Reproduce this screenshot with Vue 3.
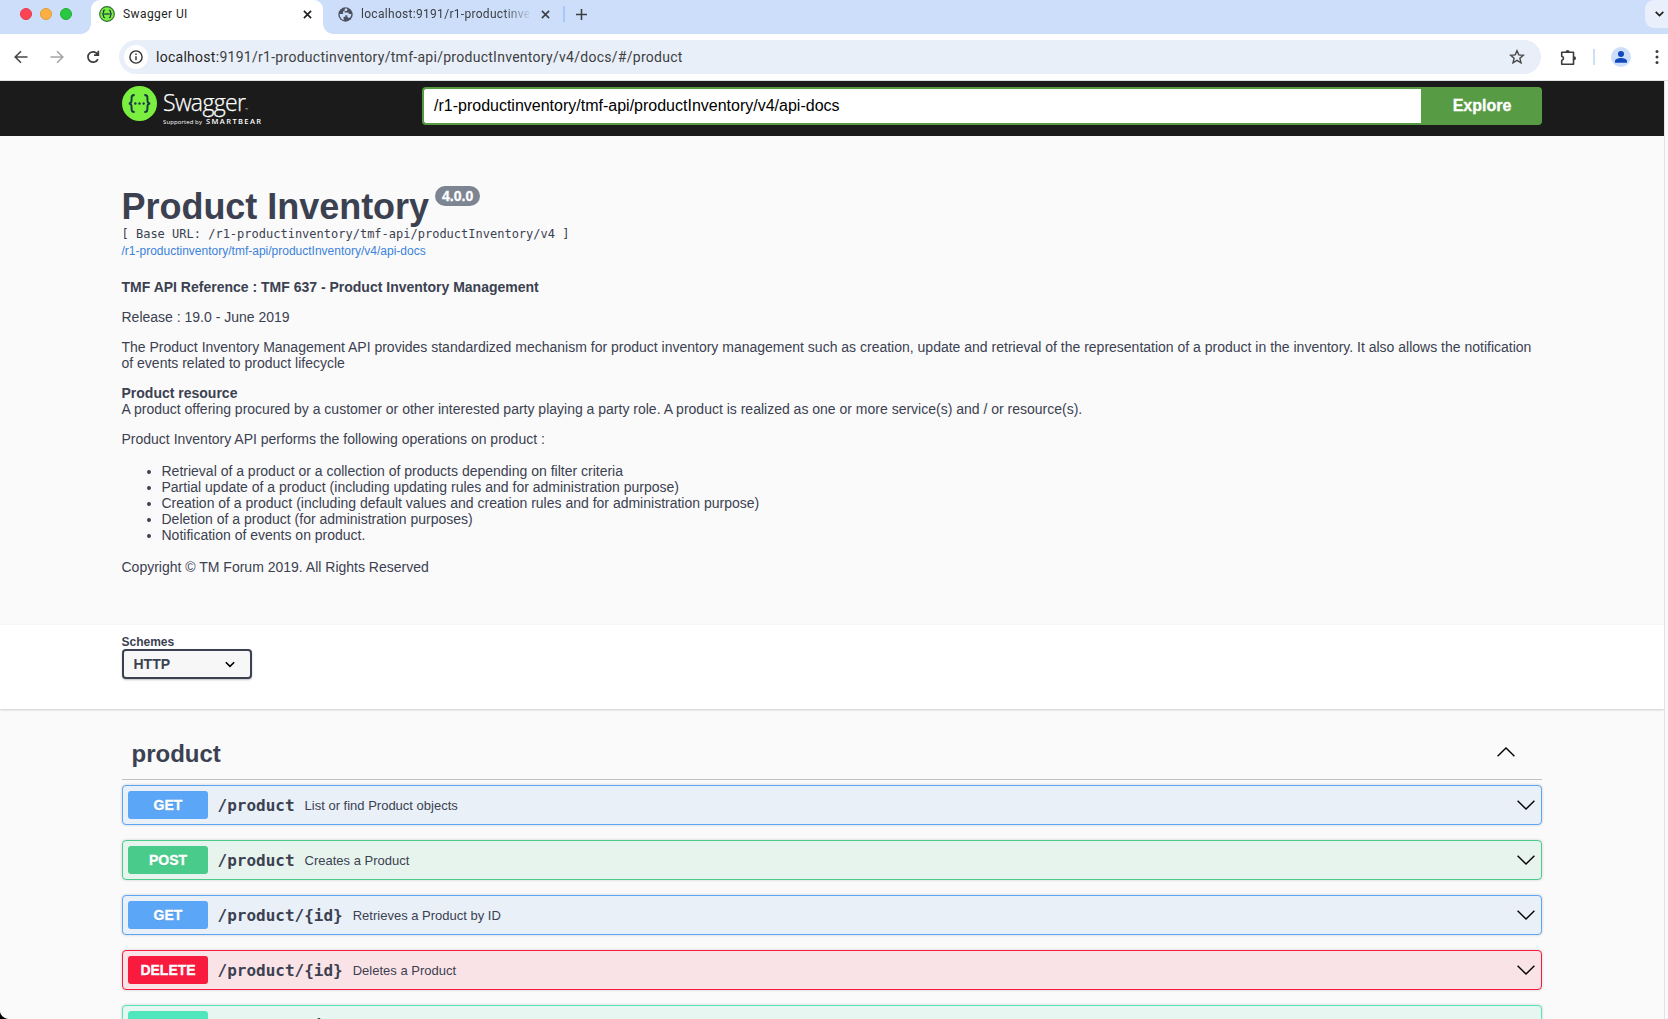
<script setup>
const operations = [
  { method: 'GET', path: '/product', summary: 'List or find Product objects', kind: 'get' },
  { method: 'POST', path: '/product', summary: 'Creates a Product', kind: 'post' },
  { method: 'GET', path: '/product/{id}', summary: 'Retrieves a Product by ID', kind: 'get' },
  { method: 'DELETE', path: '/product/{id}', summary: 'Deletes a Product', kind: 'delete' },
  { method: 'PATCH', path: '/product/{id}', summary: 'Updates partially a Product', kind: 'patch' },
]
const bullets = [
  'Retrieval of a product or a collection of products depending on filter criteria',
  'Partial update of a product (including updating rules and for administration purpose)',
  'Creation of a product (including default values and creation rules and for administration purpose)',
  'Deletion of a product (for administration purposes)',
  'Notification of events on product.',
]
</script>

<template>
  <div class="window">
    <header class="tabs">
      <div class="lights"><i class="red"></i><i class="amber"></i><i class="green"></i></div>
      <div class="tab active">
        <svg class="fav" width="16" height="16" viewBox="0 0 34 34">
          <circle cx="17" cy="17" r="15.6" fill="#7bef3f" stroke="#2f6b35" stroke-width="2.4" />
          <g fill="none" stroke="#173647" stroke-width="2.6">
            <path d="M13 8.5c-3 0-3.4 1-3.4 4 0 3-.4 4-2.6 4.5 2.200.5 2.600 1.500 2.600 4.500 0 3 .4 4 3.400 4" />
            <path d="M21 8.500c3 0 3.400 1 3.400 4 0 3 .4 4 2.600 4.500-2.200.5-2.600 1.500-2.600 4.500 0 3-.4 4-3.400 4" />
            <path d="M11 17h12" />
          </g>
        </svg>
        <span class="tab-name">Swagger UI</span>
        <svg class="x" width="9" height="9" viewBox="0 0 9 9"><path d="M.9.9l7.200 7.200M8.100.9L.9 8.100" stroke="#1f1f1f" stroke-width="1.600" /></svg>
      </div>
      <div class="tab second">
        <svg width="15" height="15" viewBox="0 0 15 15">
          <circle cx="7.500" cy="7.500" r="7.200" fill="#4b5160" />
          <path d="M1.600 7.100h3.600c1.500 0 2.200.8 2.200 2v.6H5.600v3.500C3.200 12.300 1.500 10 1.600 7.100zM9.300 1.800v1c0 .9-.6 1.300-1.400 1.300H6.600v1.500h3c.9 0 1.300.6 1.300 1.400h2.400c0 1.500-.5 2.800-1.400 3.800h-1.400c-.8 0-1.200-.5-1.200-1.200V8.200H7.200C6 8.200 5 7.300 5 6c0-1.400.6-2.200 1.800-2.500V1.700c.9-.2 1.700-.1 2.500.1z" fill="#cddefb" />
        </svg>
        <span class="tab-name faded">localhost:9191/r1-productinve</span>
        <svg class="x" width="9" height="9" viewBox="0 0 9 9"><path d="M.9.9l7.200 7.200M8.100.9L.9 8.100" stroke="#3c4043" stroke-width="1.600" /></svg>
      </div>
      <i class="divider"></i>
      <svg class="plus" width="11" height="11" viewBox="0 0 11 11"><path d="M5.500 0v11M0 5.500h11" stroke="#3c4043" stroke-width="1.600" /></svg>
      <div class="tab-search"><svg width="9" height="6" viewBox="0 0 9 6"><path d="M.7.8l3.800 3.700L8.300.8" fill="none" stroke="#1f1f1f" stroke-width="1.700" /></svg></div>
    </header>

    <div class="toolbar">
      <svg class="back" width="14" height="14" viewBox="0 0 14 14"><path d="M13.500 7H1.500M7 1.200L1.200 7 7 12.800" fill="none" stroke="#474747" stroke-width="1.600" /></svg>
      <svg class="fwd" width="14" height="14" viewBox="0 0 14 14"><path d="M.5 7h12M7 1.200L12.800 7 7 12.800" fill="none" stroke="#a5a5a5" stroke-width="1.600" /></svg>
      <svg class="reload" width="14" height="14" viewBox="0 0 14 14"><path d="M11.900 9.100A5.200 5.200 0 1 1 11.600 4.300M12.300.8v4.300H8" fill="none" stroke="#3c3c3c" stroke-width="1.700" /></svg>
      <div class="address">
        <span class="info-dot"><svg width="14" height="14" viewBox="0 0 14 14"><circle cx="7" cy="7" r="6.100" fill="none" stroke="#303030" stroke-width="1.400" /><path d="M7 6.200v4.100M7 3.600v1.500" stroke="#303030" stroke-width="1.400" /></svg></span>
        <span class="url"><b>localhost:</b>9191/r1-productinventory/tmf-api/productInventory/v4/docs/#/product</span>
        <svg class="star" width="16" height="16" viewBox="0 0 16 16"><path d="M8 1.700l1.800 4.200 4.600.4-3.500 3 1.100 4.500L8 11.400l-4 2.400 1.100-4.500-3.500-3 4.600-.4z" fill="none" stroke="#474747" stroke-width="1.400" /></svg>
      </div>
      <svg class="puzzle" width="17" height="17" viewBox="0 0 17 17"><path d="M1.700 3.200h11.800v12.100H1.700v-3.900c2.400-.8 2.400-3.400 0-4.200z" fill="none" stroke="#3c3c3c" stroke-width="1.600" stroke-linejoin="round" /><path d="M5.600 3a2 2 0 0 1 4 0zM14 7.200a2 2 0 0 1 0 4z" fill="#3c3c3c" /></svg>
      <i class="bar"></i>
      <svg class="avatar" width="20" height="20" viewBox="0 0 20 20"><circle cx="10" cy="10" r="10" fill="#cddefb" /><circle cx="10" cy="7" r="3" fill="#1149bd" /><path d="M4 15.700v-1.600c0-2 3.400-3 6-3s6 1 6 3v1.600z" fill="#1149bd" /></svg>
      <svg class="dots" width="4" height="14" viewBox="0 0 4 14" fill="#3c3c3c"><circle cx="2" cy="1.600" r="1.500" /><circle cx="2" cy="7" r="1.500" /><circle cx="2" cy="12.400" r="1.500" /></svg>
    </div>

    <div class="viewport">
      <main class="page">
        <div class="topbar">
          <div class="brand">
            <svg width="35" height="35" viewBox="0 0 34 34">
              <circle cx="17" cy="17" r="17" fill="#7bef3f" />
              <g fill="none" stroke="#173647" stroke-width="1.900">
                <path d="M12.300 8.800c-2.800 0-3 .9-3 3.800 0 3-.2 3.900-2.500 4.400 2.300.5 2.500 1.400 2.500 4.400 0 2.900.2 3.800 3 3.800" />
                <path d="M21.700 8.800c2.800 0 3 .9 3 3.800 0 3 .2 3.900 2.500 4.400-2.300.5-2.500 1.400-2.500 4.400 0 2.900-.2 3.800-3 3.800" />
              </g>
              <g fill="#173647"><circle cx="13" cy="17" r="1.150" /><circle cx="17" cy="17" r="1.150" /><circle cx="21" cy="17" r="1.150" /></g>
            </svg>
            <div class="words">
              <div class="word">Swagger<span class="tm">™</span></div>
              <div class="support"><span>Supported by</span><b>SMARTBEAR</b></div>
            </div>
          </div>
          <div class="spec">
            <div class="spec-input">/r1-productinventory/tmf-api/productInventory/v4/api-docs</div>
            <div class="explore">Explore</div>
          </div>
        </div>

        <section class="info">
          <h1>Product Inventory<span class="version">4.0.0</span></h1>
          <pre class="base">[ Base URL: /r1-productinventory/tmf-api/productInventory/v4 ]</pre>
          <a class="docs">/r1-productinventory/tmf-api/productInventory/v4/api-docs</a>
          <div class="md">
            <p><b>TMF API Reference : TMF 637 - Product Inventory Management</b></p>
            <p>Release : 19.0 - June 2019</p>
            <p>The Product Inventory Management API provides standardized mechanism for product inventory management such as creation, update and retrieval of the representation of a product in the inventory. It also allows the notification<br />of events related to product lifecycle</p>
            <p><b>Product resource</b><br />A product offering procured by a customer or other interested party playing a party role. A product is realized as one or more service(s) and / or resource(s).</p>
            <p>Product Inventory API performs the following operations on product :</p>
            <ul><li v-for="b in bullets" :key="b">{{ b }}</li></ul>
            <p>Copyright © TM Forum 2019. All Rights Reserved</p>
          </div>
        </section>

        <section class="schemes">
          <div class="label">Schemes</div>
          <div class="select">HTTP<svg width="10" height="7" viewBox="0 0 10 7"><path d="M.8 1.200L5 5.300l4.200-4.100" fill="none" stroke="#000" stroke-width="1.600" /></svg></div>
        </section>

        <section class="ops">
          <div class="tag"><h2>product</h2><svg width="18" height="10" viewBox="0 0 18 10"><path d="M.6 9.300L9 1l8.400 8.300" fill="none" stroke="#000" stroke-width="1.400" /></svg></div>
          <div v-for="(op, i) in operations" :key="i" class="op" :class="op.kind">
            <span class="method">{{ op.method }}</span>
            <span class="path">{{ op.path }}</span>
            <span class="summary">{{ op.summary }}</span>
            <svg width="18" height="10" viewBox="0 0 18 10"><path d="M.6.700L9 9l8.400-8.300" fill="none" stroke="#000" stroke-width="1.400" /></svg>
          </div>
        </section>
      </main>
      <aside class="scroll"></aside>
    </div>
    <svg class="corner" width="9" height="7" viewBox="0 0 9 7"><path d="M0 0c1 4 4 6.500 9 7H0z" fill="#000" /></svg>
  </div>
</template>

<style>
body { margin: 0; overflow: hidden; background: #fafafa; }
</style>

<style scoped>
.window { position: relative; width: 1668px; height: 1019px; overflow: hidden; display: flex; flex-direction: column; font-family: "Liberation Sans", Arial, sans-serif; color: #3b4151; box-sizing: border-box; }
.window * { box-sizing: border-box; }
svg { display: block; flex: none; }
.tabs { height: 34px; flex: none; background: #cddefb; display: flex; align-items: flex-start; font-family: Roboto, sans-serif; }
.lights { display: flex; gap: 8px; padding: 8px 0 0 20px; width: 91px; flex: none; }
.lights i { width: 12px; height: 12px; border-radius: 50%; }
.red { background: #fe4454; border: 1px solid #e23b48; }
.amber { background: #fdb041; border: 1px solid #e29c34; }
.green { background: #28c840; border: 1px solid #20ad34; }
.tab { height: 34px; display: flex; align-items: center; padding-bottom: 6px; flex: none; }
.tab.active { position: relative; width: 232px; background: #fff; border-radius: 9px 9px 0 0; padding-left: 8px; }
.tab.active::before, .tab.active::after { content: ""; position: absolute; bottom: 0; width: 10px; height: 10px; }
.tab.active::before { left: -10px; background: radial-gradient(circle at 0 0, transparent 9.500px, #fff 10px); }
.tab.active::after { right: -10px; background: radial-gradient(circle at 100% 0, transparent 9.500px, #fff 10px); }
.tab-name { font-size: 12px; letter-spacing: .42px; color: #1f1f1f; margin-left: 8px; white-space: nowrap; overflow: hidden; flex: 1; }
.tab.active .x { margin-right: 11px; }
.tab.second { width: 240px; padding-left: 15px; }
.tab-name.faded { color: #3c4043; flex: none; width: 168px; letter-spacing: .3px; -webkit-mask-image: linear-gradient(90deg, #000 85%, transparent 102%); mask-image: linear-gradient(90deg, #000 85%, transparent 102%); }
.second .x { margin-left: 12px; }
.divider { width: 2px; height: 16px; margin-top: 6px; background: #a8c7fa; }
.plus { margin: 9px 0 0 10.500px; }
.tab-search { margin-left: auto; width: 23px; height: 28px; background: #e9f0fc; border-radius: 9px 0 0 9px; display: flex; align-items: center; padding-left: 10px; }
.toolbar { height: 47px; flex: none; background: #fff; border-bottom: 1px solid #dfe3e6; display: flex; align-items: center; font-family: Roboto, sans-serif; }
.back { margin-left: 14px; }
.fwd { margin-left: 22px; }
.reload { margin-left: 22px; }
.address { margin-left: 19px; width: 1422px; height: 34px; border-radius: 17px; background: #e9eff8; display: flex; align-items: center; padding: 0 16px 0 5px; flex: none; }
.info-dot { width: 24px; height: 24px; border-radius: 50%; background: #fff; display: flex; align-items: center; justify-content: center; }
.url { margin-left: 8px; font-size: 14px; letter-spacing: .277px; color: #3c4043; flex: 1; white-space: nowrap; }
.url b { font-weight: 400; color: #1f1f1f; }
.puzzle { margin-left: 19px; }
.bar { width: 2px; height: 16px; margin-left: 16px; background: #cddefb; }
.avatar { margin-left: 16px; }
.dots { margin-left: 24px; }
.viewport { flex: 1; min-height: 0; display: flex; }
.page { flex: 1; background: #fafafa; overflow: hidden; }
.scroll { width: 4px; background: #fafafa; border-left: 1px solid #e3e3e3; }
.topbar { height: 55px; background: #1b1b1b; padding-left: 122px; display: flex; }
.brand { width: 300px; display: flex; padding-top: 5px; }
.words { margin-left: 6px; color: #fff; }
.word { height: 30px; font-family: "Open Sans", sans-serif; font-weight: 300; font-size: 23px; line-height: 33px; letter-spacing: -.65px; white-space: nowrap; -webkit-text-stroke: .25px #fff; }
.tm { font-size: 4px; -webkit-text-stroke: 0; }
.support { display: flex; align-items: baseline; height: 10px; white-space: nowrap; font-family: "Open Sans", sans-serif; font-size: 6px; line-height: 11px; letter-spacing: .1px; }
.support b { font-size: 7.500px; font-weight: 600; letter-spacing: 1.400px; margin-left: 4px; }
.spec { width: 1120px; height: 38px; margin-top: 6px; display: flex; }
.spec-input { width: 999px; border: 2px solid #569a43; border-right: 0; border-radius: 4px 0 0 4px; background: #fff; color: #000; font-size: 16px; line-height: 34px; padding-left: 10px; }
.explore { flex: 1; background: #589b45; color: #fff; font-size: 16px; font-weight: 700; line-height: 38px; text-align: center; padding-left: 1px; border-radius: 0 4px 4px 0; -webkit-text-stroke: .3px #fff; }
.info { height: 489px; padding: 50px 0 0 121.500px; }
h1 { margin: 0; font-size: 36px; line-height: 42px; height: 40px; display: flex; align-items: flex-start; letter-spacing: -.03px; }
.version { margin: 0 0 0 6px; height: 20px; padding: 0 7px; border-radius: 20px; background: #7d8492; color: #fff; font-size: 14px; line-height: 20px; letter-spacing: 0; -webkit-text-stroke: .3px #fff; }
.base { margin: 0; font-family: "DejaVu Sans Mono", monospace; font-size: 12px; line-height: 16px; }
.docs { display: block; font-size: 12px; line-height: 18px; color: #3a82db; }
.md { font-size: 14px; line-height: 16px; padding-top: 19px; white-space: nowrap; }
.md p { margin: 0 0 14px; }
.md ul { margin: 16px 0; padding-left: 40px; }
.schemes { position: relative; height: 84px; background: #fff; padding: 10px 0 0 122px; box-shadow: 0 1px 2px rgba(0,0,0,.18); }
.label { font-size: 12px; font-weight: 700; line-height: 14px; margin-left: -.5px; }
.select { width: 130px; height: 30px; border: 2px solid #3b4151; border-radius: 4px; background: #f7f7f7; box-shadow: 0 1px 2px rgba(0,0,0,.25); font-size: 14px; font-weight: 700; display: flex; align-items: center; justify-content: space-between; padding: 0 15px 0 9.500px; }
.ops { width: 1542px; padding: 0 0 0 122px; }
.tag { height: 71px; border-bottom: 1px solid #bfc0c4; display: flex; align-items: center; justify-content: space-between; padding: 20px 27px 0 9.500px; margin-bottom: 5px; }
.tag svg { margin-top: -5px; }
h2 { margin: 0; font-size: 24px; line-height: 30px; }
.op { height: 40px; border: 1px solid; border-radius: 4px; margin-bottom: 15px; display: flex; align-items: center; padding: 0 6px 0 5px; box-shadow: 0 0 3px rgba(0,0,0,.19); }
.method { width: 80px; height: 28px; border-radius: 3px; color: #fff; font-size: 14px; font-weight: 700; line-height: 28px; text-align: center; text-shadow: 0 1px 0 rgba(0,0,0,.1); -webkit-text-stroke: .3px #fff; }
.path { margin-left: 9.500px; font-family: "DejaVu Sans Mono", monospace; font-size: 16px; font-weight: 700; }
.summary { margin-left: 10px; font-size: 13px; flex: 1; }
.get { border-color: #5ba6f6; background: #e9f0f8; }
.get .method { background: #5ba6f6; }
.post { border-color: #49cc8b; background: #e7f4ed; }
.post .method { background: #49cc8b; }
.delete { border-color: #f81b3d; background: #f9e3e6; }
.delete .method { background: #f81b3d; }
.patch { border-color: #50e7bd; background: #e8f6f2; }
.patch .method { background: #50e7bd; }
.corner { position: absolute; left: 0; bottom: 0; }
</style>
